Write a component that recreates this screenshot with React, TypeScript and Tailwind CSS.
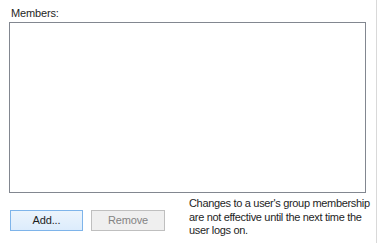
export default function App() {
  return (
    <div className="flex h-[243px] w-[379px] overflow-hidden bg-white font-['Liberation_Sans',Arial,sans-serif] text-[11px] tracking-[-0.15px] text-[#1e1e1e]">
      <div className="flex w-[376px] shrink-0 flex-col pl-[9px] pt-[6px]">
        <p className="h-[16px] shrink-0 pl-[2px] leading-[14px]">Members:</p>
        <div className="h-[171px] w-[357px] shrink-0 border border-[#828790] bg-white" />
        <div className="flex shrink-0">
          <div className="flex shrink-0 gap-[8px] pl-[1px] pt-[17px]">
            <button className="h-[21px] w-[73px] border border-[#7eb4ea] bg-[linear-gradient(180deg,#ecf4fc_0%,#dcecfc_100%)] leading-[19px] text-[#1e1e1e]">
              Add...
            </button>
            <button
              disabled
              className="h-[21px] w-[74px] border border-[#bfbfbf] bg-[#efefef] leading-[19px] text-[#838383]"
            >
              Remove
            </button>
          </div>
          <p className="ml-[24px] whitespace-nowrap pt-[4px] leading-[13.5px] tracking-[-0.32px]">
            Changes to a user's group membership
            <br />
            are not effective until the next time the
            <br />
            user logs on.
          </p>
        </div>
      </div>
      <div className="h-full w-px shrink-0 bg-[#d9d9d9]" />
    </div>
  );
}
